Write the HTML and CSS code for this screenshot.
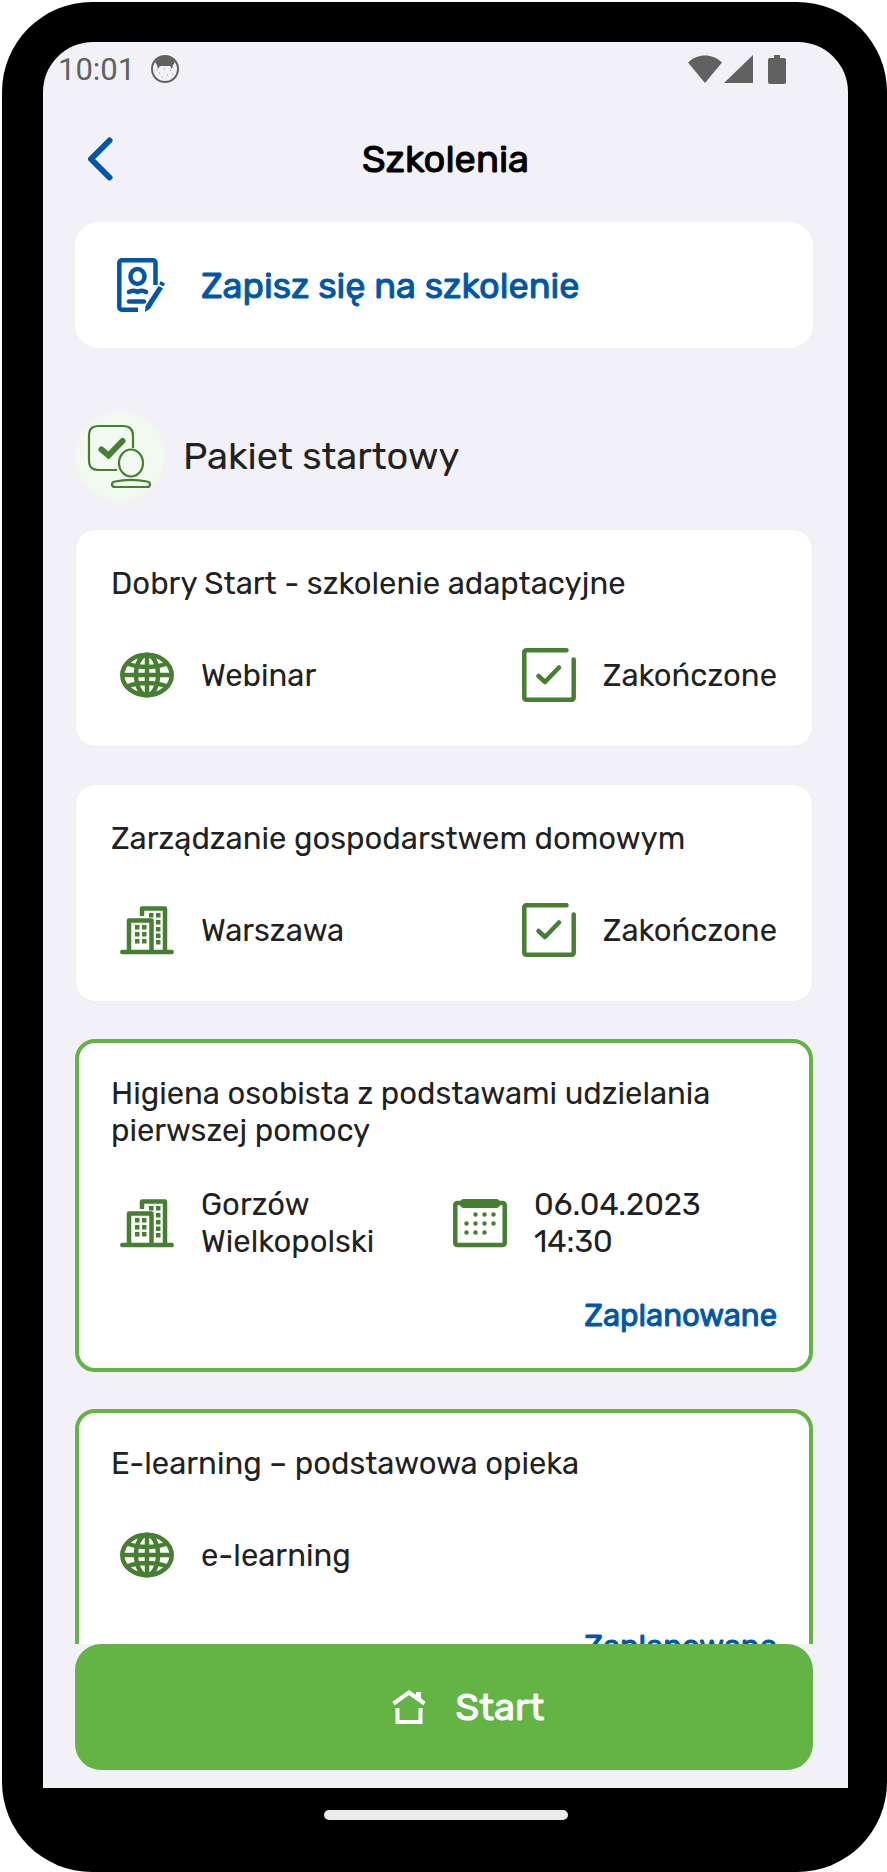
FILE: index.html
```html
<!DOCTYPE html>
<html lang="pl">
<head>
    <meta charset="UTF-8">
    <meta name="viewport" content="width=device-width, initial-scale=1.0">
    <title>Szkolenia</title>
    <link rel="stylesheet" href="styles.css">
</head>
<body>
    <!-- Shared icons -->
    <svg class="sprite" aria-hidden="true">
        <symbol id="globe" viewBox="0 0 54 54">
            <g fill="none" stroke="currentColor" stroke-width="4.500">
                <ellipse cx="27" cy="27" rx="24.700" ry="20.300"/>
                <ellipse cx="27" cy="27" rx="11" ry="20.300"/>
                <path d="M27 6v42M2 27h50M7 15.500c12 4.600 28 4.600 40 0M7 38.500c12-4.600 28-4.600 40 0"/>
            </g>
        </symbol>
        <symbol id="building" viewBox="0 0 54 54">
            <g fill="none" stroke="currentColor" stroke-width="4.500" stroke-linejoin="round">
                <path d="M2.300 49h49.400" stroke-linecap="round"/>
                <path d="M9 49V17.500h22.500V49"/>
                <path d="M22 13V5.500h23V49"/>
            </g>
            <path fill="currentColor" d="M15 22h4.500v4.500H15zM22 22h4.500v4.500H22zM15 29h4.500v4.500H15zM22 29h4.500v4.500H22zM15 36h4.500v4.500H15zM22 36h4.500v4.500H22zM29 10h4.500v4.500H29zM36 10h4.500v4.500H36zM36 17h4.500v4.500H36zM36 24h4.500v4.500H36zM36 30.500h4.500V35H36zM36 37h4.500v4.500H36z"/>
        </symbol>
        <symbol id="done" viewBox="0 0 54 54">
            <g fill="none" stroke="currentColor" stroke-width="4.500" stroke-linecap="round" stroke-linejoin="round">
                <path d="M44.500 2.300H4.300a2 2 0 0 0-2 2v45.400a2 2 0 0 0 2 2h45.400a2 2 0 0 0 2-2V11.500"/>
                <path d="M16.500 28l6.500 6L37 19.500"/>
            </g>
        </symbol>
        <symbol id="calendar" viewBox="0 0 54 54">
            <rect x="2.300" y="7" width="49.400" height="42" rx="2" fill="none" stroke="currentColor" stroke-width="4.500"/>
            <rect x="7" y="3" width="40" height="9" rx="4" fill="currentColor"/>
            <path d="M22.500 18.500h0M31.500 18.500h0M40.500 18.500h0M13.500 27.500h0M22.500 27.500h0M31.500 27.500h0M40.500 27.500h0M13.500 36.500h0M22.500 36.500h0M31.500 36.500h0" stroke="currentColor" stroke-width="4.500" stroke-linecap="round"/>
        </symbol>
    </svg>

    <div class="phone">
        <div class="screen">
            <div class="status-bar">
                <span class="time">10:01</span>
                <svg class="status-face" viewBox="0 0 28 28" aria-hidden="true">
                    <circle cx="14" cy="14" r="13" fill="none" stroke="#616161" stroke-width="2"/>
                    <path d="M4 7C8 0 20 0 24 7l-2 3-1 4-2-3H9l-2 3-1-4z" fill="#616161"/>
                    <path d="M8 18h1M13 14h1M19 15h1M16 20h1M11 22h1M21 19h1M6 15h1" stroke="#9a9a9a" stroke-width="1"/>
                </svg>
                <div class="status-icons">
                    <svg width="34" height="28" viewBox="0 0 34 28" aria-hidden="true"><path d="M17 28L0 7.500C9.500-2 24.500-2 34 7.500z" fill="#616161"/></svg>
                    <svg width="29" height="28" viewBox="0 0 29 28" aria-hidden="true"><path d="M0 28L29 0v28z" fill="#616161"/></svg>
                    <svg class="battery" width="18" height="29" viewBox="0 0 18 29" aria-hidden="true"><path d="M6 0h6v3h4a2 2 0 0 1 2 2v22a2 2 0 0 1-2 2H2a2 2 0 0 1-2-2V5a2 2 0 0 1 2-2h4z" fill="#616161"/></svg>
                </div>
            </div>

            <header class="header">
                <button class="back" type="button" aria-label="Wstecz">
                    <svg width="26" height="44" viewBox="0 0 26 44" aria-hidden="true"><path d="M22.500 3.500L4 22l18.500 18.500" fill="none" stroke="#0057a8" stroke-width="6" stroke-linecap="round" stroke-linejoin="round"/></svg>
                </button>
                <h1>Szkolenia</h1>
            </header>

            <main class="content">
                <a class="signup" href="#zapisy">
                    <svg width="48" height="54" viewBox="0 0 48 54" aria-hidden="true">
                        <g fill="none" stroke="#0057a8" stroke-width="4.500">
                            <path d="M38.500 27V4.800a2.500 2.500 0 0 0-2.500-2.500H4.800a2.500 2.500 0 0 0-2.500 2.500v44.400a2.500 2.500 0 0 0 2.500 2.500H21"/>
                            <ellipse cx="20.500" cy="18.500" rx="7" ry="7.500"/>
                            <path d="M12 34c2.500-1.500 5.500-1.500 8.500 0 3-1.500 6-1.500 8.500 0" stroke-linecap="round"/>
                            <path d="M12 43.500h15" stroke-linecap="round"/>
                        </g>
                        <path d="M41.500 28l4.500 2.300-13 20.500-5 3.200.5-6zM43.500 23l4.500 2.500-1.500 3-4.300-2.300z" fill="#0057a8"/>
                    </svg>
                    <span>Zapisz się na szkolenie</span>
                </a>

                <div class="section">
                    <svg width="90" height="90" viewBox="0 0 90 90" aria-hidden="true">
                        <circle cx="45" cy="45" r="45" fill="#f1f9f0"/>
                        <g fill="none" stroke="#467f31" stroke-width="2.200">
                            <path d="M42 59H24c-7 0-10-3-10-10V25c0-7 3-10 10-10h24c7 0 10 3 10 10v12"/>
                            <ellipse cx="56" cy="52" rx="12" ry="13.500"/>
                            <path d="M40 76c-4 0-4-5 0-5.500 10-2 22-2 32 0 4 .5 4 5.500 0 5.500z"/>
                        </g>
                        <path d="M26.500 38.500l7 6L47.500 30" fill="none" stroke="#467f31" stroke-width="6" stroke-linecap="round"/>
                    </svg>
                    <h2>Pakiet startowy</h2>
                </div>

                <article class="card">
                    <h3>Dobry Start - szkolenie adaptacyjne</h3>
                    <div class="details">
                        <div class="detail"><svg class="icon" aria-hidden="true"><use href="#globe"/></svg><span>Webinar</span></div>
                        <div class="detail"><svg class="icon" aria-hidden="true"><use href="#done"/></svg><span>Zakończone</span></div>
                    </div>
                </article>

                <article class="card">
                    <h3>Zarządzanie gospodarstwem domowym</h3>
                    <div class="details">
                        <div class="detail"><svg class="icon" aria-hidden="true"><use href="#building"/></svg><span>Warszawa</span></div>
                        <div class="detail"><svg class="icon" aria-hidden="true"><use href="#done"/></svg><span>Zakończone</span></div>
                    </div>
                </article>

                <article class="card planned">
                    <h3>Higiena osobista z podstawami udzielania pierwszej pomocy</h3>
                    <div class="details halves">
                        <div class="detail"><svg class="icon" aria-hidden="true"><use href="#building"/></svg><span>Gorzów Wielkopolski</span></div>
                        <div class="detail"><svg class="icon" aria-hidden="true"><use href="#calendar"/></svg><span>06.04.2023<br>14:30</span></div>
                    </div>
                    <p class="state">Zaplanowane</p>
                </article>

                <article class="card planned">
                    <h3>E-learning – podstawowa opieka</h3>
                    <div class="details">
                        <div class="detail"><svg class="icon" aria-hidden="true"><use href="#globe"/></svg><span>e-learning</span></div>
                    </div>
                    <p class="state">Zaplanowane</p>
                </article>
            </main>

            <footer class="footer">
                <button class="start" type="button">
                    <svg width="34" height="36" viewBox="0 0 34 36" aria-hidden="true">
                        <path d="M1.500 14.500L17 3.500l15.500 11M5.500 19v14h23V19" fill="none" stroke="#fff" stroke-width="4"/>
                        <path d="M24 3h5v9l-5-4z" fill="#fff"/>
                    </svg>
                    <span>Start</span>
                </button>
            </footer>
        </div>
        <div class="home-bar"></div>
    </div>
</body>
</html>
```
FILE: styles.css
```css
* {
    box-sizing: border-box;
}
body {
    margin: 0;
    padding: 2px 0 0 2px;
    background: #fff;
    color: #212121;
    font-family: Rubik, Inter, Roboto, sans-serif;
    font-size: 31px;
    line-height: 37px;
}
h1, h2, h3, p {
    margin: 0;
    font-size: inherit;
    font-weight: 400;
}
svg {
    display: block;
    flex: none;
}
button {
    border: 0;
    font-family: inherit;
    cursor: pointer;
}
.sprite {
    position: absolute;
    width: 0;
    height: 0;
}

/* Device */
.phone {
    display: flex;
    flex-direction: column;
    height: calc(100vh - 2px);
    padding: 40px 39px 0 41px;
    background: #000;
    border-radius: 90px;
}
.screen {
    display: flex;
    flex: 1;
    flex-direction: column;
    min-height: 0;
    background: #f2f1f7;
    border-radius: 50px 50px 0 0;
    overflow: hidden;
}
.home-bar {
    width: 244px;
    height: 10px;
    margin: 22px auto 52px;
    background: #ebebeb;
    border-radius: 5px;
}
.status-bar {
    display: flex;
    align-items: center;
    height: 54px;
    padding: 0 62px 0 15px;
}
.time {
    color: #616161;
    font-family: Roboto, sans-serif;
}
.status-face {
    width: 28px;
    height: 28px;
    margin-left: 16px;
}
.status-icons {
    display: flex;
    gap: 2px;
    margin-left: auto;
}
.battery {
    margin-left: 13px;
}

/* Emboldened labels */
.header h1, .signup, .state, .start {
    -webkit-text-stroke: 1px currentColor;
}

/* Header */
.header {
    display: grid;
    grid-template-columns: 60px 1fr 60px;
    align-items: center;
    height: 126px;
    padding: 0 30px;
}
.header h1 {
    color: #000;
    font-size: 38px;
    text-align: center;
}
.back {
    padding: 8px 14px;
    background: none;
}

/* Content */
.content {
    flex: 1;
    min-height: 0;
    padding: 0 35px 0 32px;
    overflow: hidden;
}
.signup {
    display: flex;
    align-items: center;
    gap: 36px;
    height: 126px;
    padding: 0 42px;
    background: #fff;
    border-radius: 24px;
    color: #0057a8;
    font-size: 36px;
    text-decoration: none;
}
.section {
    display: flex;
    align-items: center;
    gap: 18px;
    margin: 63px 0 28px;
}
.section h2 {
    font-size: 38px;
}
.card {
    display: flex;
    flex-direction: column;
    gap: 37px;
    margin-bottom: 37px;
    padding: 35px;
    background: #fff;
    border: 1px solid #eeedf3;
    border-radius: 20px;
}
.planned {
    padding: 32px 32px 34px;
    border: 4px solid #63b445;
}
.details {
    display: flex;
    justify-content: space-between;
    min-height: 72px;
}
.halves {
    display: grid;
    grid-template-columns: 1fr 1fr;
}
.detail {
    display: flex;
    align-items: center;
    gap: 27px;
    padding-left: 9px;
}
.icon {
    width: 54px;
    height: 54px;
    color: #467f31;
}
.state {
    color: #0057a8;
    text-align: right;
}

/* Footer */
.footer {
    padding: 0 35px 18px 32px;
}
.start {
    display: flex;
    align-items: center;
    justify-content: center;
    gap: 30px;
    width: 100%;
    height: 126px;
    padding-left: 54px;
    background: #63b445;
    border-radius: 26px;
    color: #fff;
    font-size: 38px;
}
```
